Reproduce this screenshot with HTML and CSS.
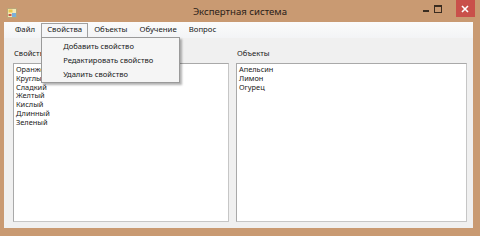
FILE: index.html
```html
<!DOCTYPE html>
<html>
<head>
<meta charset="utf-8">
<link rel="stylesheet" href="styles.css">
</head>
<body>
<div class="window">
  <div class="titlebar">
    <div class="app-icon">
      <svg width="10" height="10" viewBox="0 0 10 10"><rect x="0.5" y="0.5" width="9" height="9" fill="#f4e9b8" stroke="#b9a678"/><rect x="1.5" y="1.5" width="4" height="3" fill="#e9c84a"/><rect x="5" y="5" width="4" height="4" fill="#7ab0d8"/><rect x="1.5" y="6" width="3" height="2" fill="#c85a4a"/></svg>
    </div>
    <div class="title">Экспертная система</div>
    <div class="controls">
      <div class="ctl min"><span class="min-bar"></span></div>
      <div class="ctl max"><span class="max-box"></span></div>
      <div class="ctl close">
        <svg width="8" height="8" viewBox="0 0 8 8"><path d="M1 1 L7 7 M7 1 L1 7" stroke="#fff" stroke-width="1.6"/></svg>
      </div>
    </div>
  </div>
  <div class="client">
    <div class="menubar">
      <div class="mi">Файл</div>
      <div class="mi active">Свойства
        <div class="dropdown">
          <div class="dd-item">Добавить свойство</div>
          <div class="dd-item">Редактировать свойство</div>
          <div class="dd-item">Удалить свойство</div>
        </div>
      </div>
      <div class="mi">Объекты</div>
      <div class="mi">Обучение</div>
      <div class="mi">Вопрос</div>
    </div>
    <div class="panels">
      <div class="panel">
        <div class="label">Свойства</div>
        <div class="listbox">
          <div>Оранжевый</div>
          <div>Круглый</div>
          <div>Сладкий</div>
          <div>Желтый</div>
          <div>Кислый</div>
          <div>Длинный</div>
          <div>Зеленый</div>
        </div>
      </div>
      <div class="panel">
        <div class="label">Объекты</div>
        <div class="listbox">
          <div>Апельсин</div>
          <div>Лимон</div>
          <div>Огурец</div>
        </div>
      </div>
    </div>
  </div>
</div>
</body>
</html>
```
FILE: styles.css
```css
html, body {
  margin: 0;
  padding: 0;
}
body {
  width: 480px;
  height: 236px;
  overflow: hidden;
  font-family: "Noto Sans", "Open Sans", sans-serif;
  color: #1a1a1a;
}
.window {
  width: 480px;
  height: 236px;
  background: #c99a72;
  display: flex;
  flex-direction: column;
  box-sizing: border-box;
}
.titlebar {
  height: 22px;
  display: grid;
  grid-template-columns: 60px 1fr 60px;
  align-items: center;
  flex: none;
}
.app-icon {
  padding-left: 7px;
  padding-top: 4px;
  display: flex;
}
.title {
  text-align: center;
  font-size: 9.6px;
  color: #2a2018;
}
.controls {
  display: flex;
  justify-content: flex-end;
  align-self: start;
  height: 17px;
  padding-right: 5px;
}
.ctl {
  width: 14px;
  display: flex;
  align-items: center;
  justify-content: center;
}
.min-bar {
  width: 6px;
  height: 2px;
  background: #3a2c20;
  margin-top: 5px;
}
.max-box {
  width: 6px;
  height: 5px;
  border: 1px solid #3a2c20;
  border-top-width: 2px;
}
.close {
  width: 22px;
  background: #c9504a;
  margin-left: 11px;
}
.client {
  flex: 1;
  margin: 0 7px 8px 4px;
  background: #f0f0f0;
  display: flex;
  flex-direction: column;
}
.menubar {
  height: 16px;
  display: flex;
  align-items: flex-end;
  padding-left: 5px;
  background: linear-gradient(#fbfbfb, #f3f4f6);
  font-size: 7.8px;
  flex: none;
}
.mi {
  position: relative;
  padding: 0 5px 3px;
  height: 11px;
  line-height: 11px;
  border: 1px solid transparent;
  border-bottom: none;
}
.mi.active {
  border-color: #a0a0a0;
  background: #f5f6f8;
  z-index: 2;
}
.dropdown {
  position: absolute;
  top: 13px;
  left: -1px;
  width: 137px;
  padding: 1px 0 1px;
  background: #f5f5f5;
  border: 1px solid #9a9a9a;
  box-shadow: 2px 2px 2px rgba(0,0,0,0.3);
  font-size: 7.6px;
}
.dd-item {
  height: 14px;
  line-height: 14px;
  padding-left: 21px;
  white-space: nowrap;
}
.panels {
  flex: 1;
  display: grid;
  grid-template-columns: 216px 231px;
  column-gap: 7px;
  padding: 6px 0 6px 9px;
}
.panel {
  display: flex;
  flex-direction: column;
}
.label {
  font-size: 7.6px;
  height: 19px;
  line-height: 19px;
  padding-left: 1px;
}
.listbox {
  flex: 1;
  background: #fff;
  border: 1px solid #a9a9a9;
  border-right-color: #c6c6c6;
  border-bottom-color: #c6c6c6;
  padding: 1px 2px;
  font-size: 7.4px;
  line-height: 8.8px;
}
```
